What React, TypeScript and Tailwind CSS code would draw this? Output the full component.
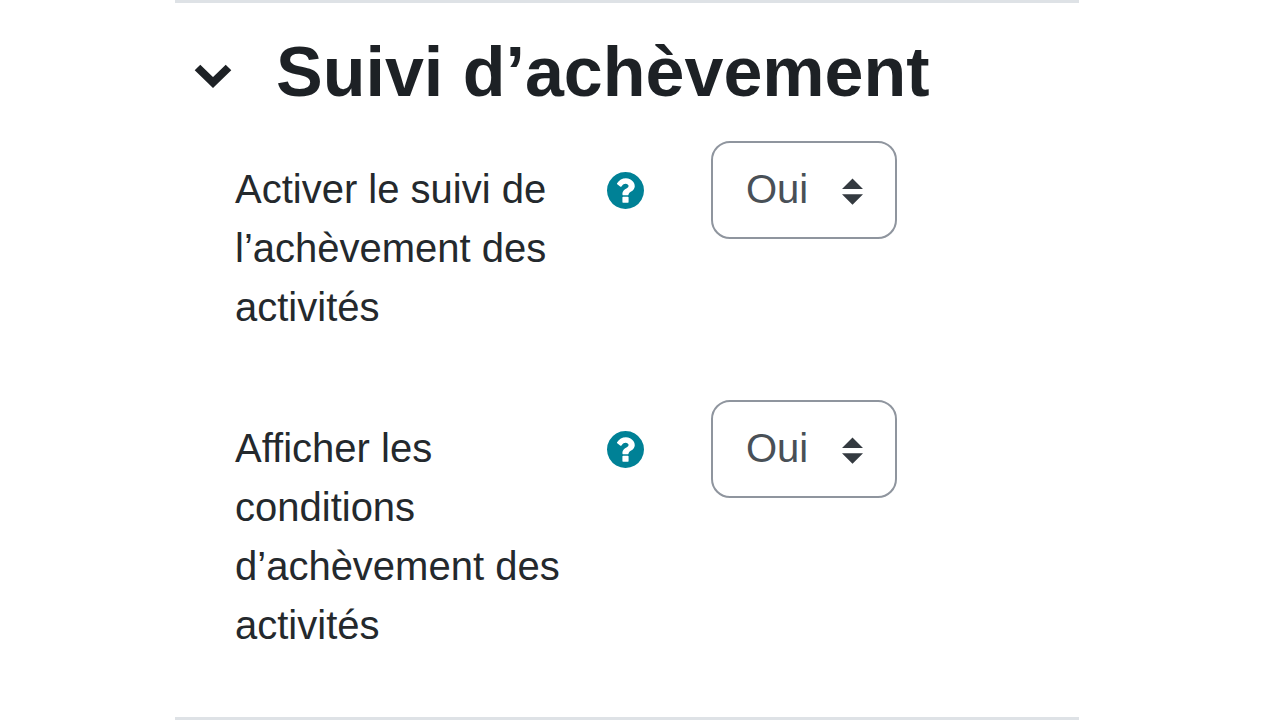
import React, { useState } from "react";

type Field = { id: string; label: string };

const fields: Field[] = [
  { id: "enable-completion", label: "Activer le suivi de l’achèvement des activités" },
  { id: "show-conditions", label: "Afficher les conditions d’achèvement des activités" },
];

function HelpIcon() {
  return (
    <svg viewBox="128 128 1536 1536" aria-hidden="true" className="size-[37px]">
      <path
        fill="currentColor"
        d="M1024 1376v-192q0-14-9-23t-23-9h-192q-14 0-23 9t-9 23v192q0 14 9 23t23 9h192q14 0 23-9t9-23zm256-672q0-88-55.5-163t-138.5-116-170-41q-243 0-371 213-15 24 8 42l132 100q7 6 19 6 16 0 25-12 53-68 86-92 34-24 86-24 48 0 85.5 26t37.5 59q0 38-20 61t-68 45q-63 28-115.5 86.5t-52.5 125.5v36q0 14 9 23t23 9h192q14 0 23-9t9-23q0-19 21.5-49.5t54.5-49.5q32-18 49-28.5t46-35 44.5-48 28-60.5 12.5-81zm384 192q0 209-103 385.5t-279.5 279.5-385.5 103-385.5-103-279.5-279.5-103-385.5 103-385.5 279.5-279.5 385.5-103 385.5 103 279.5 279.5 103 385.5z"
      />
    </svg>
  );
}

function FieldRow({ id, label }: Field) {
  const [value, setValue] = useState("Oui");
  return (
    <div className="flex items-start pl-[60px]">
      <label htmlFor={id} className="w-[340px] pt-[19px] text-[40px] leading-[59px] text-[#24292d]">
        {label}
      </label>
      <button type="button" aria-label="Aide" className="ml-8 mt-[31px] text-[#008196]">
        <HelpIcon />
      </button>
      <div className="relative ml-[67px]">
        <select
          id={id}
          value={value}
          onChange={(e) => setValue(e.target.value)}
          className="h-[98px] w-[186px] appearance-none rounded-[19px] border-2 border-[#8f959e] bg-white pb-0.5 pl-[33px] text-[40px] text-[#495057]"
        >
          <option>Oui</option>
          <option>Non</option>
        </select>
        <svg viewBox="0 0 4 5" aria-hidden="true" className="pointer-events-none absolute right-[34px] top-[37px] h-[27px] w-[21px] text-[#343a40]">
          <path fill="currentColor" d="M2 0 0 2h4zm0 5L0 3h4z" />
        </svg>
      </div>
    </div>
  );
}

export default function App() {
  return (
    <main className="min-h-screen bg-white font-['Liberation_Sans',Arial,sans-serif]">
      <section className="ml-[175px] mr-[201px] border-y-[3px] border-[#dee2e6]">
        <h2 className="flex items-center pl-[18px] pt-[27px] text-[70px] font-bold leading-[84px] text-[#1d2125]">
          <button type="button" aria-label="Replier la section" className="mr-[43px]">
            <svg viewBox="0 0 40 28" aria-hidden="true" className="mt-2 h-7 w-10">
              <path d="M4.500 5.500 20 20.500 35.500 5.500" fill="none" stroke="currentColor" strokeWidth="8" />
            </svg>
          </button>
          Suivi d’achèvement
        </h2>
        <div className="flex flex-col gap-[63px] pb-[62px] pt-[27px]">
          {fields.map((f) => (
            <FieldRow key={f.id} {...f} />
          ))}
        </div>
      </section>
    </main>
  );
}
